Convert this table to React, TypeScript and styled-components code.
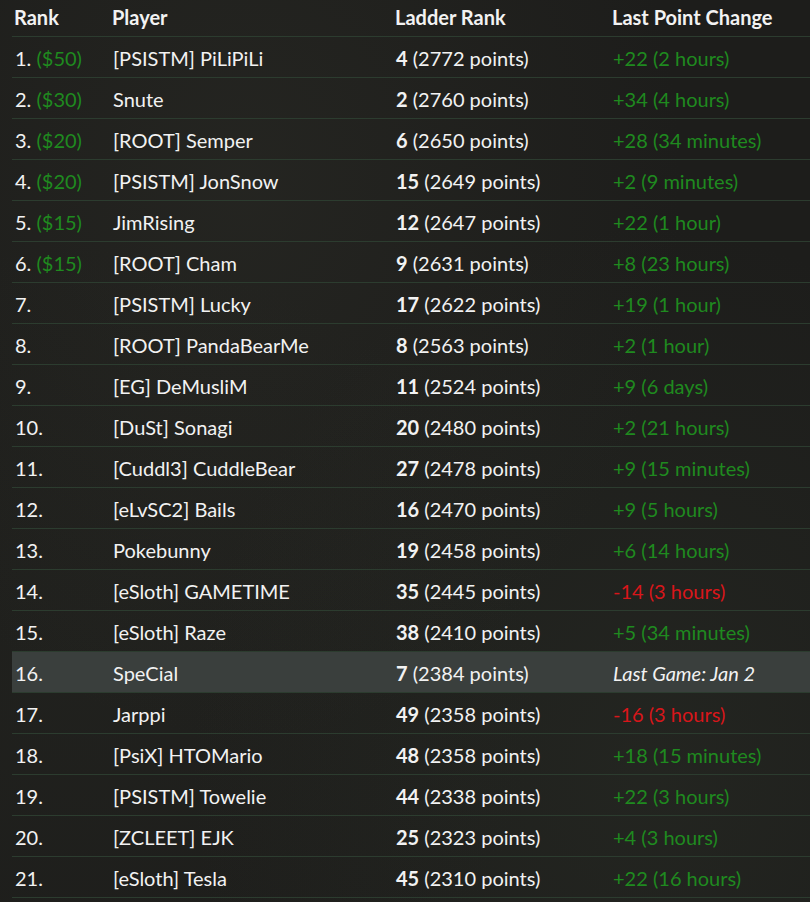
import React from 'react';
import styled, { createGlobalStyle } from 'styled-components';

interface Entry {
  rank: number;
  prize?: number;
  player: string;
  ladder: number;
  points: number;
  change?: number;
  ago?: string;
  lastGame?: string;
}

const entries: Entry[] = [
  { rank: 1, prize: 50, player: '[PSISTM] PiLiPiLi', ladder: 4, points: 2772, change: 22, ago: '2 hours' },
  { rank: 2, prize: 30, player: 'Snute', ladder: 2, points: 2760, change: 34, ago: '4 hours' },
  { rank: 3, prize: 20, player: '[ROOT] Semper', ladder: 6, points: 2650, change: 28, ago: '34 minutes' },
  { rank: 4, prize: 20, player: '[PSISTM] JonSnow', ladder: 15, points: 2649, change: 2, ago: '9 minutes' },
  { rank: 5, prize: 15, player: 'JimRising', ladder: 12, points: 2647, change: 22, ago: '1 hour' },
  { rank: 6, prize: 15, player: '[ROOT] Cham', ladder: 9, points: 2631, change: 8, ago: '23 hours' },
  { rank: 7, player: '[PSISTM] Lucky', ladder: 17, points: 2622, change: 19, ago: '1 hour' },
  { rank: 8, player: '[ROOT] PandaBearMe', ladder: 8, points: 2563, change: 2, ago: '1 hour' },
  { rank: 9, player: '[EG] DeMusliM', ladder: 11, points: 2524, change: 9, ago: '6 days' },
  { rank: 10, player: '[DuSt] Sonagi', ladder: 20, points: 2480, change: 2, ago: '21 hours' },
  { rank: 11, player: '[Cuddl3] CuddleBear', ladder: 27, points: 2478, change: 9, ago: '15 minutes' },
  { rank: 12, player: '[eLvSC2] Bails', ladder: 16, points: 2470, change: 9, ago: '5 hours' },
  { rank: 13, player: 'Pokebunny', ladder: 19, points: 2458, change: 6, ago: '14 hours' },
  { rank: 14, player: '[eSloth] GAMETIME', ladder: 35, points: 2445, change: -14, ago: '3 hours' },
  { rank: 15, player: '[eSloth] Raze', ladder: 38, points: 2410, change: 5, ago: '34 minutes' },
  { rank: 16, player: 'SpeCial', ladder: 7, points: 2384, lastGame: 'Jan 2' },
  { rank: 17, player: 'Jarppi', ladder: 49, points: 2358, change: -16, ago: '3 hours' },
  { rank: 18, player: '[PsiX] HTOMario', ladder: 48, points: 2358, change: 18, ago: '15 minutes' },
  { rank: 19, player: '[PSISTM] Towelie', ladder: 44, points: 2338, change: 22, ago: '3 hours' },
  { rank: 20, player: '[ZCLEET] EJK', ladder: 25, points: 2323, change: 4, ago: '3 hours' },
  { rank: 21, player: '[eSloth] Tesla', ladder: 45, points: 2310, change: 22, ago: '16 hours' },
];

const GlobalStyle = createGlobalStyle`
  html, body {
    margin: 0;
    height: 100%;
    overflow: hidden;
  }
  body {
    background-color: #1d1d1b;
    background-image:
      radial-gradient(ellipse at 30% 20%, rgba(70, 72, 60, 0.18), transparent 55%),
      radial-gradient(ellipse at 80% 85%, rgba(60, 70, 55, 0.2), transparent 50%),
      radial-gradient(ellipse at 10% 75%, rgba(40, 42, 36, 0.3), transparent 45%);
    color: #f2f2f2;
    font-family: Lato, "Open Sans", sans-serif;
    font-size: 20px;
  }
`;

const Table = styled.table`
  margin-left: 12px;
  width: 798px;
  border-collapse: collapse;
  table-layout: fixed;
`;

const HeadCell = styled.th<{ $w?: number }>`
  box-sizing: border-box;
  width: ${(p) => (p.$w ? `${p.$w}px` : 'auto')};
  text-align: left;
  font-weight: 700;
  line-height: 24px;
  padding: 5px 0 7px 2px;
  white-space: nowrap;
`;

const Row = styled.tr<{ $active?: boolean }>`
  border-top: 1px solid #2c3c2f;
  border-bottom: 1px solid #2c3c2f;
  background: ${(p) => (p.$active ? '#3a3f3d' : 'transparent')};
`;

const Cell = styled.td`
  box-sizing: border-box;
  line-height: 24px;
  padding: 9px 0 7px 3px;
  white-space: nowrap;
  overflow: hidden;
`;

const Prize = styled.span`
  color: #1f8a1f;
`;

const Strong = styled.b`
  font-weight: 700;
`;

const Change = styled.span<{ $down?: boolean }>`
  color: ${(p) => (p.$down ? '#d8161a' : '#1f8a1f')};
`;

const LastGame = styled.i`
  font-style: italic;
`;

export default function App() {
  return (
    <>
      <GlobalStyle />
      <Table>
        <thead>
          <tr>
            <HeadCell $w={98}>Rank</HeadCell>
            <HeadCell $w={283}>Player</HeadCell>
            <HeadCell $w={217}>Ladder Rank</HeadCell>
            <HeadCell>Last Point Change</HeadCell>
          </tr>
        </thead>
        <tbody>
          {entries.map((e) => (
            <Row key={e.rank} $active={!!e.lastGame}>
              <Cell>
                {e.rank}. {e.prize !== undefined && <Prize>(${e.prize})</Prize>}
              </Cell>
              <Cell>{e.player}</Cell>
              <Cell>
                <Strong>{e.ladder}</Strong> ({e.points} points)
              </Cell>
              <Cell>
                {e.lastGame ? (
                  <LastGame>Last Game: {e.lastGame}</LastGame>
                ) : (
                  <Change $down={(e.change ?? 0) < 0}>
                    {(e.change ?? 0) < 0 ? e.change : `+${e.change}`} ({e.ago})
                  </Change>
                )}
              </Cell>
            </Row>
          ))}
        </tbody>
      </Table>
    </>
  );
}
